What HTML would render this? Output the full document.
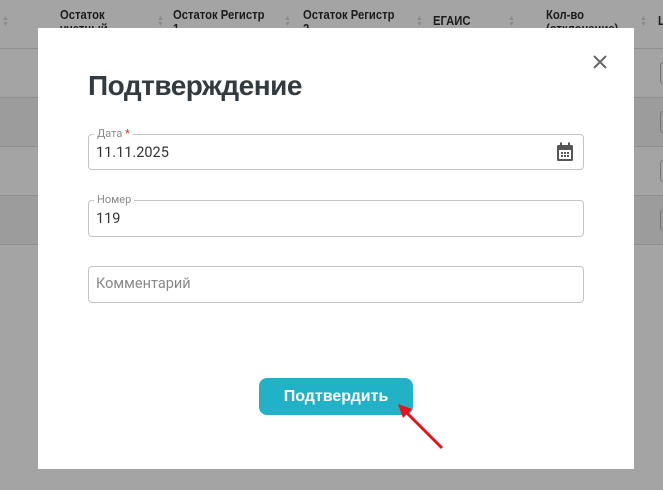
<!DOCTYPE html>
<html><head><meta charset="utf-8"><style>
body{margin:0;width:663px;height:490px;overflow:hidden;background:#a4a4a4;font-family:"Roboto","Liberation Sans",sans-serif;position:relative}
.h{position:absolute;font-size:12.5px;color:#1c1c1c;font-weight:bold;line-height:14px;font-family:"Liberation Sans",sans-serif;transform:scaleX(.9);transform-origin:left}
.ln{position:absolute;left:0;width:663px;height:1px;background:#8e8e8e}
.dk{position:absolute;left:0;width:663px;background:#9c9c9c}
.sq{position:absolute;left:660px;width:10px;height:20px;border:1px solid #777;border-radius:3px}
.ar{position:absolute;color:#8a8a8a;font-size:7px;line-height:6px}
.m{position:absolute;left:38px;top:28px;width:596px;height:441px;background:#fff}
.t{position:absolute;left:50px;top:42px;font-size:28px;font-weight:bold;color:#333a40;font-family:"Liberation Sans",sans-serif;letter-spacing:-.5px}
.f{position:absolute;left:50px;width:496px;height:36px;border:1px solid #c4c4c4;border-radius:4px;box-sizing:border-box}
.lb{position:absolute;left:5px;top:-8px;background:#fff;padding:0 3px;font-size:11px;color:#8a8a8a}
.v{position:absolute;left:7px;top:9px;font-size:14.5px;color:#333}
.b{position:absolute;left:221px;top:350px;width:154px;height:37px;background:#21b2c7;border-radius:8px;color:#fff;font-weight:bold;font-size:16px;text-align:center;line-height:37px;font-family:"Liberation Sans",sans-serif}
</style></head><body>
<div class="dk" style="top:97px;height:49px"></div>
<div class="dk" style="top:195px;height:49px"></div>
<div class="ln" style="top:48px"></div><div class="ln" style="top:97px"></div><div class="ln" style="top:146px"></div><div class="ln" style="top:195px"></div><div class="ln" style="top:244px"></div>
<div class="sq" style="top:62px"></div><div class="sq" style="top:111px"></div><div class="sq" style="top:160px"></div><div class="sq" style="top:209px"></div>
<div class="ar" style="left:2px;top:15px">▲<br>▼</div>
<div class="ar" style="left:157px;top:15px">▲<br>▼</div>
<div class="ar" style="left:284px;top:15px">▲<br>▼</div>
<div class="ar" style="left:416px;top:15px">▲<br>▼</div>
<div class="ar" style="left:508px;top:15px">▲<br>▼</div>
<div class="ar" style="left:640px;top:15px">▲<br>▼</div>
<div class="h" style="left:60px;top:8px">Остаток<br>учетный</div>
<div class="h" style="left:173px;top:8px">Остаток Регистр<br>1</div>
<div class="h" style="left:303px;top:8px">Остаток Регистр<br>2</div>
<div class="h" style="left:433px;top:14px">ЕГАИС</div>
<div class="h" style="left:546px;top:8px">Кол-во<br>(отклонение)</div>
<div class="h" style="left:658px;top:14px">Ц</div>
<div class="m">
<svg style="position:absolute;left:555px;top:27px" width="14" height="14"><path d="M1 1L13 13M13 1L1 13" stroke="#666" stroke-width="2"/></svg>
<div class="t">Подтверждение</div>
<div class="f" style="top:106px"><span class="lb">Дата <span style="color:#d33">*</span></span><span class="v">11.11.2025</span>
<svg style="position:absolute;right:9px;top:7px" width="18" height="20" viewBox="0 0 18 20"><rect x="1" y="3" width="16" height="16" rx="1.5" fill="#555"/><rect x="3" y="8" width="12" height="9" fill="#fff"/><rect x="4" y="0.5" width="2" height="4" fill="#555"/><rect x="12" y="0.5" width="2" height="4" fill="#555"/><g fill="#555"><rect x="5" y="10" width="2" height="2"/><rect x="8" y="10" width="2" height="2"/><rect x="11" y="10" width="2" height="2"/><rect x="5" y="13" width="2" height="2"/><rect x="8" y="13" width="2" height="2"/><rect x="11" y="13" width="2" height="2"/></g></svg></div>
<div class="f" style="top:172px;height:37px"><span class="lb">Номер</span><span class="v">119</span></div>
<div class="f" style="top:238px;height:37px"><span class="v" style="color:#888;top:8px">Комментарий</span></div>
<div class="b">Подтвердить</div>
<svg style="position:absolute;left:356px;top:372px" width="52" height="52"><path d="M48 48L9 9" stroke="#e5141a" stroke-width="3"/><path d="M4 4L18 9L9 18Z" fill="#e5141a"/></svg>
</div>
</body></html>
